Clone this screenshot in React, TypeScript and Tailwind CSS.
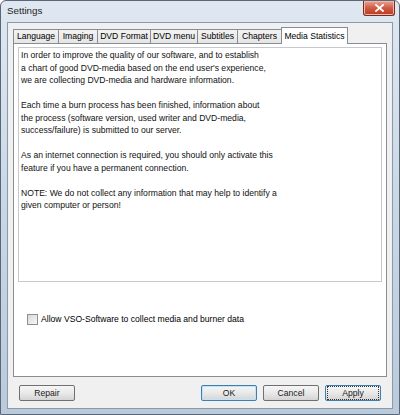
import React, { useState } from 'react';

const tabs = [
  { label: 'Language', w: 'w-[46px]' },
  { label: 'Imaging', w: 'w-[40px]' },
  { label: 'DVD Format', w: 'w-[54px]' },
  { label: 'DVD menu', w: 'w-[48px]' },
  { label: 'Subtitles', w: 'w-[41px]' },
  { label: 'Chapters', w: 'w-[45px]' },
  { label: 'Media Statistics', w: 'w-[67px]' },
];

const infoText = `In order to improve the quality of our software, and to establish
a chart of good DVD-media based on the end user's experience,
we are collecting DVD-media and hardware information.

Each time a burn process has been finished, information about
the process (software version, used writer and DVD-media,
success/failure) is submitted to our server.

As an internet connection is required, you should only activate this
feature if you have a permanent connection.

NOTE: We do not collect any information that may help to identify a
given computer or person!`;

// Vista style push button
const DialogButton = ({ label, variant }: { label: string; variant?: 'default' | 'focus' }) => (
  <button
    className={`flex h-[16px] w-[56px] items-center justify-center rounded-[2px] border text-[8.6px] leading-none text-[#1a1a1a] bg-gradient-to-b from-[#f6f6f6] via-[#e9e9e9] to-[#d4d4d4] ${
      variant === 'default' ? 'border-[#3c7fb1] shadow-[inset_0_0_0_1px_#bfe3f7]' : variant === 'focus' ? 'border-[#3c7fb1]' : 'border-[#707070]'
    }`}
  >
    <span className={variant === 'focus' ? 'inline-flex h-[12px] w-[50px] items-center justify-center outline-1 outline-dotted outline-[#333]' : ''}>
      {label}
    </span>
  </button>
);

export default function App() {
  const [active, setActive] = useState(6);
  const [allow, setAllow] = useState(false);

  return (
    <div
      className="flex h-[415px] w-[400px] flex-col overflow-hidden rounded-t-[6px] border border-[#5a6778] bg-gradient-to-b from-[#dfe8f1] via-[#c9d7e5] to-[#b9cadb] text-[8.6px] text-black"
      style={{ fontFamily: '"Liberation Sans", Arial, sans-serif' }}
    >
      {/* Title bar */}
      <div className="flex h-[21px] shrink-0 items-start justify-between pl-[6px] pr-[4px]">
        <span className="mt-[5px] text-[9.8px] leading-none text-[#1e1e1e]">Settings</span>
        <div className="flex h-[15px] w-[32px] items-center justify-center rounded-b-[3px] border border-t-0 border-[#7a2a22] bg-gradient-to-b from-[#e8a493] via-[#cf5a43] to-[#b83a24] shadow-[inset_0_0_0_1px_#f0b8a8]">
          <svg width="9" height="8" viewBox="0 0 9 8">
            <path d="M1 1 L8 7 M8 1 L1 7" stroke="#fff" strokeWidth="1.8" strokeLinecap="square" />
          </svg>
        </div>
      </div>

      {/* Client area */}
      <div className="mx-[6px] mb-[5px] flex flex-1 flex-col border border-[#8b99a8] bg-[#f0f0f0] px-[5px] pt-[5px]">
        {/* Tab strip */}
        <div className="flex h-[15px] items-end">
          {tabs.map((t, i) => {
            const sel = i === active;
            return (
              <div
                key={t.label}
                onClick={() => setActive(i)}
                className={`relative flex shrink-0 cursor-default items-center justify-center whitespace-nowrap border border-b-0 border-[#898c95] leading-none ${t.w} ${
                  sel ? 'z-10 -mb-px h-[17px] bg-white' : 'h-[14px] bg-gradient-to-b from-[#f3f3f3] to-[#e5e5e5]'
                } ${i > 0 ? '-ml-px' : ''}`}
              >
                {t.label}
              </div>
            );
          })}
        </div>

        {/* Tab panel */}
        <div className="flex h-[334px] flex-col border border-[#898c95] bg-white px-[4px] pt-[3px]">
          <div className="h-[235px] whitespace-pre border border-[#c5c9d0] px-[2px] pt-[1px] leading-[12.5px] text-[#111]">
            {infoText}
          </div>
          <label className="ml-[9px] mt-[32px] flex items-center gap-[3px]">
            <span
              onClick={() => setAllow(!allow)}
              className="flex h-[11px] w-[11px] items-center justify-center border border-[#8f8f8f] bg-gradient-to-br from-[#d9d9d9] to-[#f7f7f7]"
            >
              {allow && <span className="text-[9px] leading-none">✓</span>}
            </span>
            <span className="leading-none">Allow VSO-Software to collect media and burner data</span>
          </label>
        </div>

        {/* Buttons */}
        <div className="mt-[8px] flex items-center px-[6px]">
          <DialogButton label="Repair" />
          <div className="flex-1" />
          <div className="flex gap-[6px]">
            <DialogButton label="OK" variant="default" />
            <DialogButton label="Cancel" />
            <DialogButton label="Apply" variant="focus" />
          </div>
        </div>
      </div>
    </div>
  );
}
